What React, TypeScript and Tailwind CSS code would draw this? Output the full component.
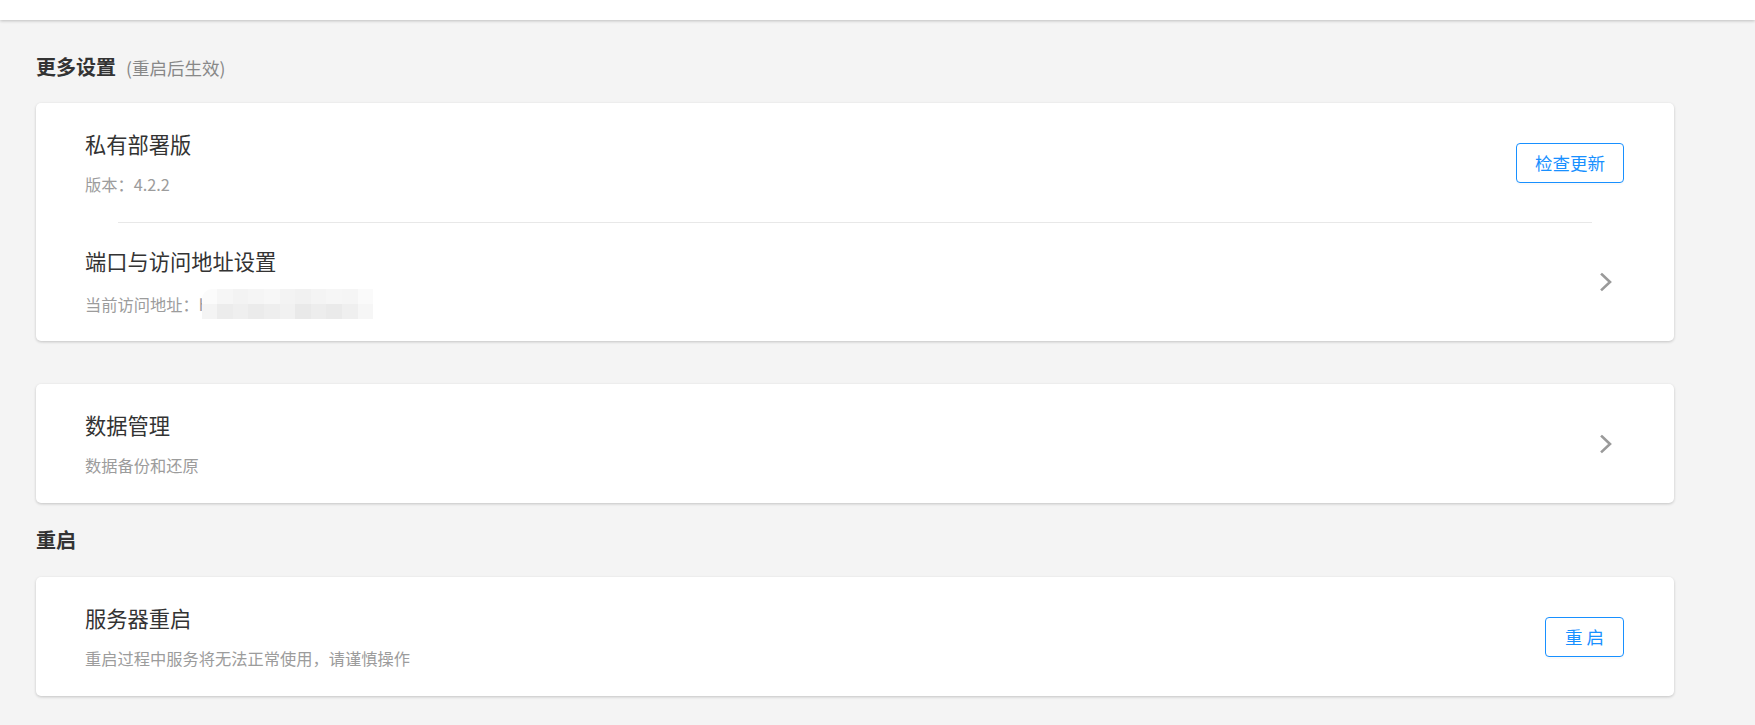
import React from 'react';

const mosaic: string[][] = [
  ['bg-[#fbfbfb]', 'bg-[#f6f6f6]', 'bg-[#f3f3f3]', 'bg-[#f5f5f5]', 'bg-[#f7f7f7]', 'bg-[#f3f3f3]', 'bg-[#f1f1f1]', 'bg-[#f4f4f4]', 'bg-[#f6f6f6]', 'bg-[#f5f5f5]', 'bg-[#fafafa]'],
  ['bg-[#f4f4f4]', 'bg-[#ececec]', 'bg-[#efefef]', 'bg-[#ebebeb]', 'bg-[#eeeeee]', 'bg-[#f1f1f1]', 'bg-[#e9e9e9]', 'bg-[#ededed]', 'bg-[#eaeaea]', 'bg-[#efefef]', 'bg-[#f6f6f6]'],
];

const Chevron = () => (
  <svg width="12" height="20" viewBox="0 0 12 20" fill="none">
    <polyline points="2,2.5 10,10 2,17.5" stroke="#9a9a9a" strokeWidth="2.6" strokeLinecap="square" />
  </svg>
);

const OutlineButton = ({ label, wide }: { label: string; wide?: boolean }) => (
  <button
    className={`h-[40px] ${wide ? 'px-[19px]' : 'px-[18px]'} border border-[#1890ff] rounded-[4px] text-[#1890ff] text-[17.5px] leading-[38px] bg-white shadow-[0_2px_0_rgba(0,0,0,0.02)] whitespace-pre`}
  >
    {label}
  </button>
);

const Row = ({
  title,
  desc,
  right,
  chevron,
  short,
}: {
  title: string;
  desc: React.ReactNode;
  right?: React.ReactNode;
  chevron?: boolean;
  short?: boolean;
}) => (
  <div
    className={`flex items-center justify-between ${short ? 'h-[118px]' : 'h-[119px]'} pl-[49px] ${chevron ? 'pr-[62px]' : 'pr-[50px]'}`}
  >
    <div className="flex flex-col">
      <div className="text-[21.25px] leading-[30px] text-[#333]">{title}</div>
      <div className="mt-[13px] text-[16.25px] leading-[24px] text-[#9c9c9c] flex items-center">{desc}</div>
    </div>
    {right}
    {chevron && <Chevron />}
  </div>
);

export default function App() {
  return (
    <div className="min-h-screen bg-[#f4f4f4] font-['Noto_Sans_CJK_SC',sans-serif]">
      {/* Top bar */}
      <div className="h-[20px] bg-white shadow-[0_1px_3px_rgba(0,0,0,0.22)]" />

      <div className="pl-[36px] pr-[81px]">
        <div className="mt-[33px] mb-[22px] flex items-baseline h-[28px]">
          <span className="text-[20px] leading-[28px] font-bold text-[#333]">更多设置</span>
          <span className="ml-[10px] text-[17.5px] leading-[28px] text-[#888]">(重启后生效)</span>
        </div>

        <div className="bg-white rounded-[5px] shadow-[0_1px_3px_rgba(0,0,0,0.2)]">
          <Row title="私有部署版" desc="版本：4.2.2" right={<OutlineButton label="检查更新" />} />
          <div className="mx-[82px] h-px bg-[#e8e8e8]" />
          <Row
            title="端口与访问地址设置"
            chevron
            short
            desc={
              <>
                <span>当前访问地址：h</span>
                <span className="-ml-[7px] flex flex-col rounded-tl-[10px] overflow-hidden">
                  {mosaic.map((r, i) => (
                    <span key={i} className="flex">
                      {r.map((c, j) => (
                        <span key={j} className={`w-[15.6px] h-[15px] ${c}`} />
                      ))}
                    </span>
                  ))}
                </span>
              </>
            }
          />
        </div>

        <div className="mt-[43px] bg-white rounded-[5px] shadow-[0_1px_3px_rgba(0,0,0,0.2)]">
          <Row title="数据管理" desc="数据备份和还原" chevron />
        </div>

        <div className="mt-[23px] mb-[23px] h-[28px] text-[20px] leading-[28px] font-bold text-[#333]">重启</div>

        <div className="bg-white rounded-[5px] shadow-[0_1px_3px_rgba(0,0,0,0.2)]">
          <Row
            title="服务器重启"
            desc="重启过程中服务将无法正常使用，请谨慎操作"
            right={<OutlineButton label="重 启" wide />}
          />
        </div>
      </div>
    </div>
  );
}
